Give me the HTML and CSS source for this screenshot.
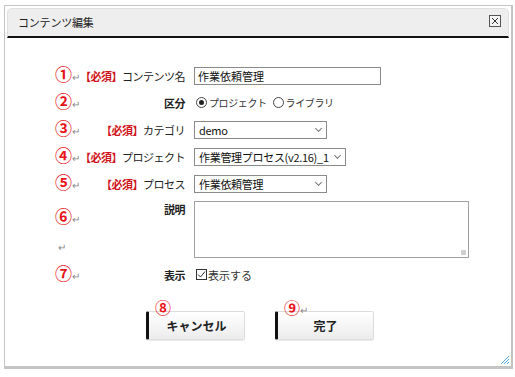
FILE: index.html
```html
<!DOCTYPE html>
<html lang="ja">
<head>
    <meta charset="UTF-8">
    <title>コンテンツ編集</title>
    <link rel="stylesheet" href="styles.css">
</head>
<body>
    <div class="dialog">
        <div class="header">
            <span class="title">コンテンツ編集</span>
            <span class="close">
                <svg width="12" height="12" viewBox="0 0 12 12">
                    <rect x="0.5" y="0.5" width="11" height="11" fill="#f4f4f4" stroke="#555"/>
                    <path d="M3 3 L9 9 M9 3 L3 9" stroke="#333" stroke-width="1"/>
                </svg>
            </span>
        </div>

        <div class="form">
            <div class="row">
                <span class="num">①<i>↵</i></span>
                <label><b class="req">【必須】</b>コンテンツ名</label>
                <input type="text" class="text" value="作業依頼管理">
            </div>
            <div class="row">
                <span class="num">②<i>↵</i></span>
                <label class="strong">区分</label>
                <div class="radios">
                    <span class="radio on"></span>プロジェクト
                    <span class="radio"></span>ライブラリ
                </div>
            </div>
            <div class="row">
                <span class="num">③<i>↵</i></span>
                <label><b class="req">【必須】</b>カテゴリ</label>
                <div class="select w133">demo<span class="caret"></span></div>
            </div>
            <div class="row">
                <span class="num">④<i>↵</i></span>
                <label><b class="req">【必須】</b>プロジェクト</label>
                <div class="select w152">作業管理プロセス(v2.16)_1<span class="caret"></span></div>
            </div>
            <div class="row">
                <span class="num">⑤<i>↵</i></span>
                <label><b class="req">【必須】</b>プロセス</label>
                <div class="select w133">作業依頼管理<span class="caret"></span></div>
            </div>
            <div class="row tall">
                <div class="marks">
                    <span class="num">⑥<i>↵</i></span>
                    <span class="ret">↵</span>
                </div>
                <label class="strong">説明</label>
                <div class="textarea"><span class="grip"></span></div>
            </div>
            <div class="row">
                <span class="num">⑦<i>↵</i></span>
                <label class="strong">表示</label>
                <div class="check"><span class="box">
                    <svg width="11" height="11" viewBox="0 0 11 11">
                        <rect x="0.5" y="0.5" width="10" height="10" fill="#fff" stroke="#333"/>
                        <path d="M2 5.5 L4.5 8 L9 2.5" fill="none" stroke="#333" stroke-width="1"/>
                    </svg>
                </span>表示する</div>
            </div>
        </div>

        <div class="buttons">
            <div class="btn-wrap">
                <span class="num small">⑧</span>
                <button class="btn">キャンセル</button>
            </div>
            <div class="btn-wrap">
                <span class="num small">⑨<i>↵</i></span>
                <button class="btn">完了</button>
            </div>
        </div>

        <svg class="resize" width="10" height="10" viewBox="0 0 10 10">
            <path d="M1 9 L9 1 M4 9 L9 4 M7 9 L9 7" stroke="#5aa9e6" stroke-width="1"/>
        </svg>
    </div>
</body>
</html>
```

FILE: styles.css
```css
body {
    margin: 0;
    font-family: "Noto Sans CJK JP", "Noto Sans", sans-serif;
    font-size: 11px;
    color: #222;
    background: #fff;
}
.dialog {
    position: relative;
    margin: 5px 2px 0 4px;
    height: 364px;
    border: 1px solid #c4c4c4;
    border-bottom: 3px solid #c4c4c4;
    border-right: 2px solid #c4c4c4;
    box-sizing: border-box;
}
.header {
    margin: 2px 2px 0 2px;
    height: 30px;
    background: #eeeeee;
    border: 1px solid #e0e0e0;
    border-bottom: 2px solid #111;
    border-radius: 5px 5px 0 0;
    box-sizing: border-box;
    display: flex;
    align-items: center;
    justify-content: space-between;
    padding: 0 7px 2px 10px;
}
.title {
    font-size: 11px;
    letter-spacing: -0.2px;
    color: #222;
}
.close {
    display: flex;
    margin-top: -2px;
}
.form {
    padding: 24px 0 0 50px;
}
.row {
    display: grid;
    grid-template-columns: 30px 91px auto;
    column-gap: 9px;
    align-items: center;
    height: 27px;
}
.row.tall {
    height: 64px;
    align-items: start;
    padding-top: 4px;
    box-sizing: border-box;
}
.num {
    color: #e8141b;
    font-size: 17px;
    font-weight: bold;
    line-height: 20px;
    white-space: nowrap;
}
.num i, .ret {
    font-style: normal;
    font-weight: normal;
    color: #888;
    font-size: 10px;
}
.marks {
    display: flex;
    flex-direction: column;
    gap: 10px;
    padding-top: 5px;
}
.ret {
    padding-left: 3px;
}
label {
    justify-self: end;
    white-space: nowrap;
    letter-spacing: -0.5px;
}
.req {
    color: #d0141b;
    font-weight: bold;
}
.strong {
    font-weight: bold;
}
.text {
    width: 187px;
    height: 18px;
    box-sizing: border-box;
    border: 1px solid #8a8a8a;
    padding: 0 3px;
    font-family: inherit;
    font-size: 11px;
    color: #111;
}
.radios {
    display: flex;
    align-items: center;
    font-size: 10px;
    letter-spacing: -0.4px;
    color: #333;
}
.radio {
    width: 9px;
    height: 9px;
    border: 1px solid #444;
    border-radius: 50%;
    margin: 0 2px 0 2px;
    position: relative;
}
.radios .radio:nth-of-type(2) {
    margin-left: 6px;
}
.radio.on::after {
    content: "";
    position: absolute;
    left: 2px;
    top: 2px;
    width: 5px;
    height: 5px;
    border-radius: 50%;
    background: #222;
}
.select {
    height: 18px;
    box-sizing: border-box;
    border: 1px solid #8a8a8a;
    padding: 0 3px 0 4px;
    display: flex;
    align-items: center;
    justify-content: space-between;
    white-space: nowrap;
    letter-spacing: -0.3px;
    color: #111;
}
.w133 { width: 133px; }
.w152 { width: 152px; }
.caret {
    flex: none;
    width: 4px;
    height: 4px;
    border-right: 1px solid #777;
    border-bottom: 1px solid #777;
    transform: rotate(45deg);
    margin: -3px 2px 0 3px;
}
.textarea {
    position: relative;
    width: 275px;
    height: 57px;
    box-sizing: border-box;
    border: 1px solid #a0a0a0;
}
.grip {
    position: absolute;
    right: 2px;
    bottom: 2px;
    width: 5px;
    height: 5px;
    background: radial-gradient(circle, #999 0.6px, transparent 0.8px) 0 0 / 2px 2px;
}
.check {
    display: flex;
    align-items: center;
    gap: 1px;
    color: #333;
}
.box {
    display: flex;
    margin-left: 2px;
}
.buttons {
    display: flex;
    gap: 30px;
    padding: 11px 0 0 141px;
}
.btn-wrap {
    position: relative;
    padding-top: 12px;
}
.num.small {
    position: absolute;
    top: -2px;
    left: 9px;
    font-size: 16px;
}
.btn {
    width: 99px;
    height: 29px;
    border: 1px solid #dcdcdc;
    border-left: 3px solid #111;
    border-radius: 2px;
    background: linear-gradient(#ffffff, #ececec);
    font-family: inherit;
    font-size: 12px;
    font-weight: bold;
    color: #222;
    box-shadow: 0 1px 1px rgba(0, 0, 0, 0.08);
}
.resize {
    position: absolute;
    right: 1px;
    bottom: 1px;
}
```
